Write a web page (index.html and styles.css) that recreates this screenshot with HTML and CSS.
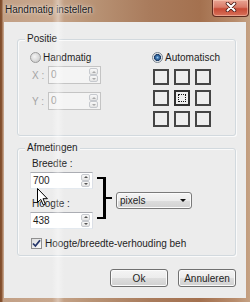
FILE: index.html
```html
<!DOCTYPE html>
<html lang="nl">
<head>
  <meta charset="UTF-8" />
  <title>Handmatig instellen</title>
  <link rel="stylesheet" href="styles.css">
</head>
<body>
  <div class="window">
    <div class="titlebar">
      <span class="title">Handmatig instellen</span>
      <div class="close">
        <svg width="12" height="10" viewBox="0 0 12 10">
          <path d="M2.5 1.5 L9.5 8.5 M9.5 1.5 L2.5 8.5" stroke="#4a1a14" stroke-width="3.6" stroke-linecap="round" />
          <path d="M2.5 1.5 L9.5 8.5 M9.5 1.5 L2.5 8.5" stroke="#fff" stroke-width="2" stroke-linecap="round" />
        </svg>
      </div>
    </div>

    <div class="client">
      <div class="group group-pos">
        <span class="group-title">Positie</span>
        <div class="col-left">
          <div class="radio-row"><span class="radio"></span>Handmatig</div>
          <div class="coord-row first">
            <span class="coord-label">X :</span>
            <div class="spin spin-coord disabled">
              <span class="spin-value">0</span>
              <span class="spin-btns"><span class="spin-btn up"></span><span class="spin-btn down"></span></span>
            </div>
          </div>
          <div class="coord-row">
            <span class="coord-label">Y :</span>
            <div class="spin spin-coord disabled">
              <span class="spin-value">0</span>
              <span class="spin-btns"><span class="spin-btn up"></span><span class="spin-btn down"></span></span>
            </div>
          </div>
        </div>
        <div class="col-right">
          <div class="radio-row"><span class="radio checked"></span>Automatisch</div>
          <div class="anchor-grid">
            <span class="cell"></span><span class="cell"></span><span class="cell"></span>
            <span class="cell"></span><span class="cell selected"></span><span class="cell"></span>
            <span class="cell"></span><span class="cell"></span><span class="cell"></span>
          </div>
        </div>
      </div>

      <div class="group group-size">
        <span class="group-title">Afmetingen</span>
        <div class="size-row">
          <div class="size-fields">
            <span class="field-label">Breedte :</span>
            <div class="spin spin-size">
              <span class="spin-value">700</span>
              <span class="spin-btns"><span class="spin-btn up"></span><span class="spin-btn down"></span></span>
            </div>
            <span class="field-label second">Hoogte :</span>
            <div class="spin spin-size">
              <span class="spin-value">438</span>
              <span class="spin-btns"><span class="spin-btn up"></span><span class="spin-btn down"></span></span>
            </div>
          </div>
          <div class="bracket"></div>
          <div class="dropdown"><span>pixels</span><span class="dropdown-arrow"></span></div>
        </div>
        <div class="check-row">
          <span class="checkbox">
            <svg width="9" height="9" viewBox="0 0 9 9"><path d="M1 4.5 L3.4 7 L8 1.2" fill="none" stroke="#25366a" stroke-width="1.8" /></svg>
          </span>
          <span class="check-text">Hoogte/breedte-verhouding beh</span>
        </div>
      </div>

      <div class="actions">
        <button class="btn">Ok</button>
        <button class="btn">Annuleren</button>
      </div>
    </div>

    <div class="glare"></div>
    <svg class="cursor" width="12" height="18" viewBox="0 0 12 18">
      <path d="M0.5 0.5 L0.5 14.5 L3.8 11.4 L6.2 16.8 L8.3 15.9 L6 10.7 L10.4 10.7 Z" fill="#fff" stroke="#000" stroke-width="1" stroke-linejoin="round" />
    </svg>
  </div>
</body>
</html>
```

FILE: styles.css
```css
* {
  box-sizing: border-box;
}
body {
  margin: 0;
  font-family: "Liberation Sans", Arial, sans-serif;
  font-size: 10px;
  color: #1e1e1e;
  background: #b48a6a;
}
.window {
  position: relative;
  width: 250px;
  height: 302px;
  overflow: hidden;
  background: linear-gradient(90deg, #7c4a2a 0, #8a5634 2px, #c2a086 3px, #c8a78d 50px, #b99476 90px, #a97b5c 150px, #a4714f 200px, #b88c6c 235px, #c5a284 250px);
}

/* title bar */
.titlebar {
  height: 22px;
  display: flex;
  justify-content: space-between;
  align-items: flex-start;
}
.title {
  padding: 3px 0 0 5px;
  line-height: 13px;
  color: #1a1a1a;
  text-shadow: 0 0 5px rgba(255, 255, 255, 0.7), 0 0 2px rgba(255, 255, 255, 0.6);
}
.close {
  width: 37px;
  height: 17px;
  margin-right: 1px;
  border: 1px solid #5e2a1e;
  border-top: none;
  border-radius: 0 0 4px 4px;
  background: linear-gradient(#e9a594 0, #d97b68 45%, #c74a35 55%, #d8725a 100%);
  box-shadow: inset 0 0 0 1px rgba(255, 220, 200, 0.45);
  display: flex;
  align-items: flex-start;
  justify-content: center;
  padding-top: 2px;
}

/* client area */
.client {
  margin: 0 4px;
  height: 276px;
  background: #ececec;
  padding: 17px 10px 0 13px;
}
.group {
  position: relative;
  border: 1px solid #d2d9de;
  border-radius: 3px;
  box-shadow: inset 1px 1px 0 #fafafa, 1px 1px 0 #fafafa;
}
.group-title {
  position: absolute;
  top: -8px;
  left: 7px;
  padding: 0 2px;
  line-height: 13px;
  background: #ececec;
}
.group-pos {
  height: 97px;
  display: flex;
  padding: 10px 0 0 12px;
}
.group-size {
  height: 108px;
  margin-top: 12px;
  padding: 8px 0 0 12px;
}

/* radios */
.radio-row {
  height: 14px;
  display: flex;
  align-items: center;
  gap: 2px;
}
.radio {
  width: 11px;
  height: 11px;
  border-radius: 50%;
  border: 1px solid #9a9a9a;
  background: radial-gradient(circle at 40% 40%, #f4f4f4 0, #d2d2d2 70%, #c4c4c4 100%);
}
.radio.checked {
  border-color: #7a8590;
  background: radial-gradient(circle at 50% 50%, #9cc6ea 0, #3c78b4 1.5px, #1c3a64 3.2px, #e2e6ea 3.8px, #f0f0f0 100%);
}

/* position group */
.col-left {
  width: 122px;
}
.coord-row {
  display: flex;
  align-items: center;
  margin-top: 8px;
}
.coord-row.first {
  margin-top: 2px;
}
.coord-label {
  width: 18px;
  padding-left: 2px;
  color: #a4a4a4;
}
.anchor-grid {
  display: grid;
  grid-template-columns: repeat(3, 16px);
  grid-auto-rows: 16px;
  gap: 5px;
  margin: 5px 0 0 1px;
}
.cell {
  border: 2px solid #454545;
  background: #eeeeee;
}
.cell.selected {
  position: relative;
  border-color: #303030;
}
.cell.selected::after {
  content: "";
  position: absolute;
  inset: 2px;
  border: 1px dotted #111;
}

/* spin boxes */
.spin {
  display: flex;
  align-items: stretch;
  border: 1px solid #abadb3;
  border-color: #abadb3 #dbdfe6 #e3e9ef #e2e3ea;
  background: #fff;
}
.spin-coord {
  width: 53px;
  height: 18px;
}
.spin-size {
  width: 63px;
  height: 17px;
  margin-top: 1px;
}
.spin.disabled {
  background: #f4f4f4;
  border-color: #c4c4c4;
  color: #a0a0a0;
}
.spin-value {
  flex: 1;
  padding-left: 2px;
  line-height: 15px;
}
.spin-btns {
  width: 9px;
  margin: 1px 2px 1px 0;
  display: flex;
  flex-direction: column;
}
.spin-btn {
  flex: 1;
  border: 1px solid #c6c9ce;
  border-radius: 2px;
  background: linear-gradient(#f8f8f8, #e4e4e4);
  display: flex;
  align-items: center;
  justify-content: center;
}
.spin-btn::after {
  content: "";
  border-left: 2px solid transparent;
  border-right: 2px solid transparent;
}
.spin-btn.up::after {
  border-bottom: 2px solid #555;
}
.spin-btn.down::after {
  border-top: 2px solid #555;
}
.spin.disabled .spin-btn.up::after {
  border-bottom-color: #aaa;
}
.spin.disabled .spin-btn.down::after {
  border-top-color: #aaa;
}

/* size group */
.size-row {
  display: flex;
  align-items: flex-start;
}
.size-fields {
  width: 63px;
  display: flex;
  flex-direction: column;
}
.field-label {
  line-height: 14px;
  padding-left: 2px;
}
.field-label.second {
  margin-top: 8px;
}
.bracket {
  position: relative;
  width: 9px;
  height: 42px;
  margin: 20px 0 0 4px;
  border: 2px solid #000;
  border-left: none;
  border-right-width: 3px;
}
.bracket::after {
  content: "";
  position: absolute;
  top: 18px;
  right: -9px;
  width: 6px;
  height: 2px;
  background: #000;
}
.dropdown {
  width: 76px;
  height: 17px;
  margin: 35px 0 0 10px;
  border: 1px solid #7a7a7a;
  border-radius: 3px;
  background: linear-gradient(#f4f4f4 0, #ececec 50%, #dedede 50%, #d2d2d2 100%);
  box-shadow: inset 0 0 0 1px #fbfbfb;
  display: flex;
  align-items: center;
  justify-content: space-between;
  padding: 0 5px 0 3px;
  line-height: 14px;
}
.dropdown-arrow {
  border-left: 3px solid transparent;
  border-right: 3px solid transparent;
  border-top: 3px solid #111;
}
.check-row {
  display: flex;
  align-items: center;
  gap: 3px;
  height: 14px;
  margin: 7px 0 0 1px;
}
.checkbox {
  width: 11px;
  height: 11px;
  border: 1px solid #8f8f8f;
  background: linear-gradient(135deg, #dcdcdc, #fbfbfb);
  display: flex;
  align-items: center;
  justify-content: center;
}
.check-text {
  white-space: nowrap;
}

/* buttons */
.actions {
  display: flex;
  justify-content: flex-end;
  gap: 10px;
  margin-top: 13px;
}
.btn {
  width: 58px;
  height: 18px;
  padding: 0;
  border: 1px solid #707070;
  border-radius: 3px;
  background: linear-gradient(#f4f4f4 0, #ececec 50%, #dedede 50%, #d0d0d0 100%);
  box-shadow: inset 0 0 0 1px #fbfbfb;
  font: inherit;
  color: #1e1e1e;
}

/* overlays */
.glare {
  position: absolute;
  top: 0;
  bottom: 0;
  left: 52px;
  width: 12px;
  background: linear-gradient(90deg, rgba(255, 255, 255, 0), rgba(255, 255, 255, 0.35) 50%, rgba(255, 255, 255, 0));
  pointer-events: none;
}
.cursor {
  position: absolute;
  left: 37px;
  top: 188px;
}
```
